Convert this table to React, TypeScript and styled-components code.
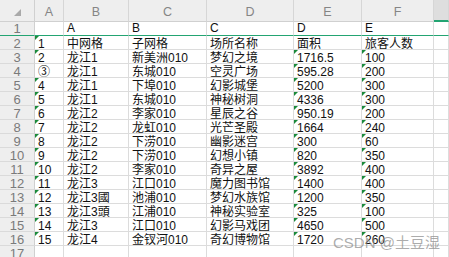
import React from "react";
import styled, { createGlobalStyle } from "styled-components";

const Global = createGlobalStyle`
  html, body { margin: 0; padding: 0; background: #fff; overflow: hidden; }
`;

const GREEN = "#23a472";

const Sheet = styled.div`
  position: relative;
  display: grid;
  grid-template-columns: 35px 29px 65px 78px 87px 68px 72px 1fr;
  grid-template-rows: 22px repeat(17, 14px);
  width: 449px;
  height: 257px;
  overflow: hidden;
  font-family: "Liberation Sans", "Noto Sans CJK SC", sans-serif;
`;

const ColHead = styled.div<{ $filler?: boolean }>`
  box-sizing: border-box;
  display: flex;
  align-items: center;
  justify-content: center;
  padding-top: 3px;
  background: ${(p) => (p.$filler ? "#dedede" : "#eeeeee")};
  border-right: 1px solid #d6d6d6;
  border-bottom: ${(p) => (p.$filler ? `2px solid ${GREEN}` : "1px solid #d0d0d0")};
  color: #858585;
  font-size: 12.5px;
`;

const Corner = styled.div`
  box-sizing: border-box;
  display: flex;
  align-items: flex-end;
  justify-content: flex-end;
  padding: 0 13px 5px 0;
  background: #eeeeee;
  border-right: 1px solid #d0d0d0;
  border-bottom: 1px solid #d0d0d0;
`;

const RowHead = styled.div<{ $freeze?: boolean }>`
  box-sizing: border-box;
  display: flex;
  align-items: center;
  justify-content: center;
  padding-top: ${(p) => (p.$freeze ? "0" : "2px")};
  background: #eeeeee;
  border-right: 1px solid #d0d0d0;
  border-bottom: 1px solid ${(p) => (p.$freeze ? GREEN : "#dadada")};
  color: #7a7a7a;
  font-size: 13px;
  line-height: 12px;
  overflow: hidden;
`;

const Cell = styled.div<{ $freeze?: boolean; $flag?: boolean }>`
  position: relative;
  box-sizing: border-box;
  display: flex;
  align-items: center;
  padding: ${(p) => (p.$freeze ? "0 0 1px 3px" : "2px 0 0 3px")};
  border-right: 1px solid #dcdcdc;
  border-bottom: 1px solid ${(p) => (p.$freeze ? GREEN : "#dcdcdc")};
  color: #111;
  font-size: 12px;
  line-height: 12px;
  white-space: nowrap;
  overflow: hidden;
  &::before {
    content: "";
    display: ${(p) => (p.$flag ? "block" : "none")};
    position: absolute;
    left: 0;
    top: 0;
    width: 0;
    height: 0;
    border-top: 4px solid #1b8a3a;
    border-right: 4px solid transparent;
  }
`;

const Watermark = styled.div`
  position: absolute;
  left: 333px;
  top: 231px;
  font-family: "Liberation Sans", "Noto Sans CJK SC", sans-serif;
  font-size: 15px;
  color: rgba(140, 140, 140, 0.72);
  white-space: nowrap;
  pointer-events: none;
`;

const cols = ["A", "B", "C", "D", "E", "F"];

const rows: string[][] = [
  ["", "A", "B", "C", "D", "E"],
  ["1", "中网格", "子网格", "场所名称", "面积", "旅客人数"],
  ["2", "龙江1", "新美洲010", "梦幻之境", "1716.5", "100"],
  ["③", "龙江1", "东城010", "空灵广场", "595.28", "200"],
  ["4", "龙江1", "下埠010", "幻影城堡", "5200", "300"],
  ["5", "龙江1", "东城010", "神秘树洞", "4336", "300"],
  ["6", "龙江2", "李家010", "星辰之谷", "950.19", "200"],
  ["7", "龙江2", "龙虹010", "光芒圣殿", "1664", "240"],
  ["8", "龙江2", "下涝010", "幽影迷宫", "300", "60"],
  ["9", "龙江2", "下涝010", "幻想小镇", "820", "350"],
  ["10", "龙江2", "李家010", "奇异之屋", "3892", "400"],
  ["11", "龙江3", "江口010", "魔力图书馆", "1400", "400"],
  ["12", "龙江3國", "池浦010", "梦幻水族馆", "1200", "350"],
  ["13", "龙江3頭", "江浦010", "神秘实验室", "325", "100"],
  ["14", "龙江3", "江口010", "幻影马戏团", "4650", "500"],
  ["15", "龙江4", "金钗河010", "奇幻博物馆", "1720", "260"],
  ["", "", "", "", "", ""],
];

function hasFlag(r: number, c: number): boolean {
  if (r < 1 || r > 15) return false;
  if (c === 0) return r !== 3;
  if (c === 4 || c === 5) return r >= 2;
  return false;
}

export default function App() {
  return (
    <>
      <Global />
      <Sheet>
        <Corner>
          <svg width="7" height="7" viewBox="0 0 7 7">
            <polygon points="7,0 7,7 0,7" fill="#a9a9a9" />
          </svg>
        </Corner>
        {cols.map((c) => (
          <ColHead key={c}>{c}</ColHead>
        ))}
        <ColHead $filler />
        {rows.map((row, r) => (
          <React.Fragment key={r}>
            <RowHead $freeze={r === 0}>{r + 1}</RowHead>
            {row.map((v, c) => (
              <Cell key={c} $freeze={r === 0} $flag={hasFlag(r, c)}>
                {v}
              </Cell>
            ))}
            <Cell $freeze={r === 0} />
          </React.Fragment>
        ))}
        <Watermark>CSDN @土豆湿</Watermark>
      </Sheet>
    </>
  );
}
